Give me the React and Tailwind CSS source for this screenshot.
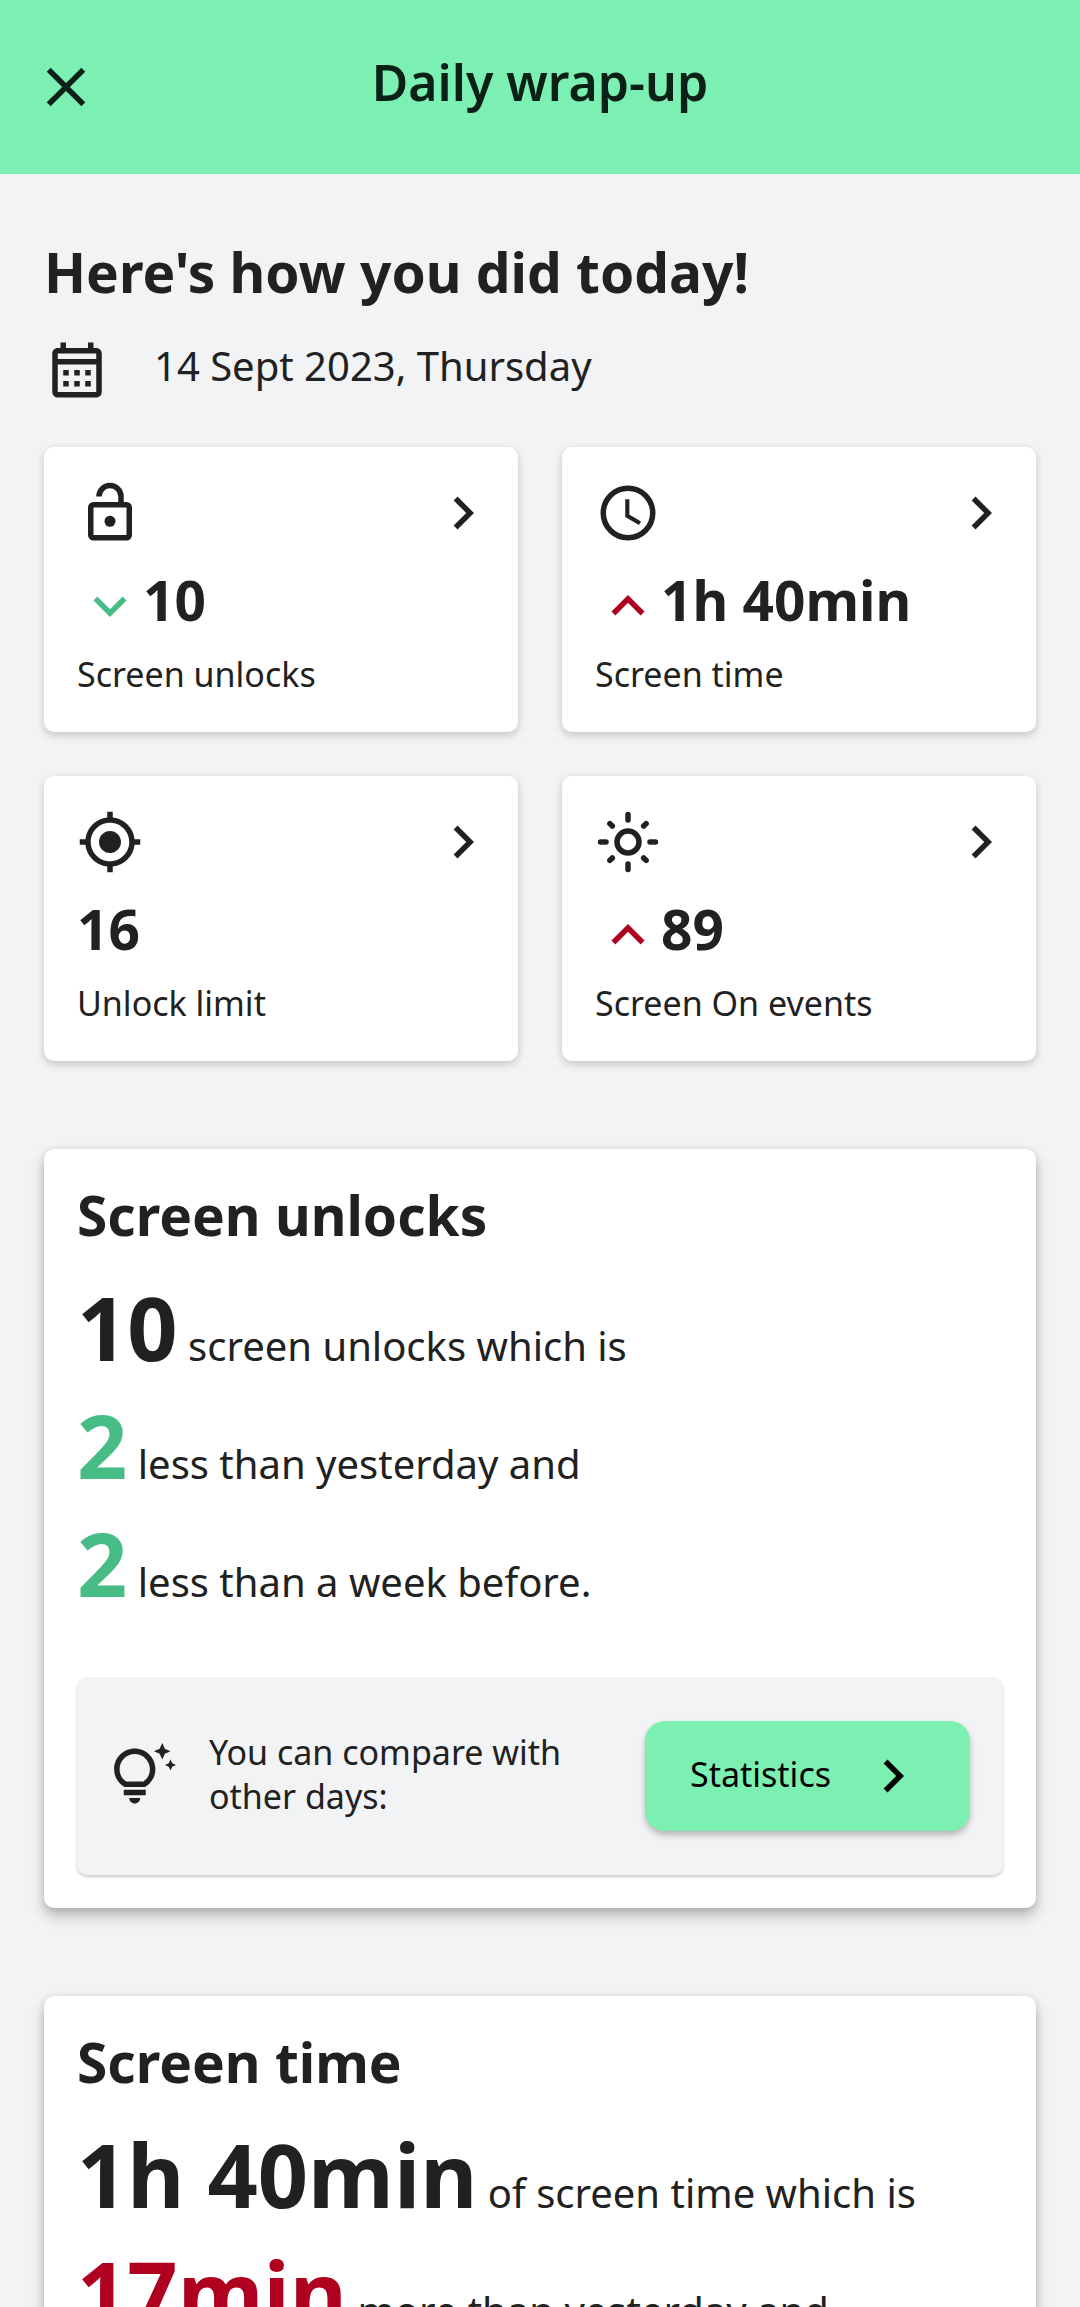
import {
  MdClose,
  MdOutlineCalendarMonth,
  MdChevronRight,
  MdExpandMore,
  MdExpandLess,
  MdGpsFixed,
  MdOutlineTipsAndUpdates,
} from "react-icons/md";

function LockOpenIcon() {
  return (
    <svg viewBox="0 0 24 24" className="size-[66px]" fill="none" stroke="currentColor" strokeWidth="2" aria-hidden="true">
      <rect x="5" y="9" width="14" height="12" rx="1" />
      <path d="M8 6a4 4 0 0 1 8 0v3" />
      <circle cx="12" cy="15" r="2" fill="currentColor" stroke="none" />
    </svg>
  );
}

function ClockIcon() {
  return (
    <svg viewBox="0 0 24 24" className="size-[66px]" fill="none" stroke="currentColor" strokeWidth="2" aria-hidden="true">
      <circle cx="12" cy="12" r="9" />
      <path d="M11.75 7v6l4.6 2.7" strokeWidth="1.5" />
    </svg>
  );
}

function SunIcon() {
  return (
    <svg viewBox="0 0 24 24" className="size-[66px]" fill="none" stroke="currentColor" strokeWidth="2" strokeLinecap="round" aria-hidden="true">
      <circle cx="12" cy="12" r="4" />
      <path d="M12 2v2M12 20v2M2 12h2M20 12h2M5.4 5.3l.9.9M17.7 17.8l.9.9M18.6 5.3l-.9.9M6.3 17.8l-.9.9" />
    </svg>
  );
}

function StatCard({ icon, trend, value, label }) {
  return (
    <a
      href="#details"
      className="block rounded-[10px] bg-white pt-[33px] pr-[22px] pb-9 pl-[33px] shadow-[0_3px_8px_rgba(0,0,0,0.2)]"
    >
      <div className="flex items-center justify-between">
        {icon}
        <MdChevronRight className="size-[66px]" />
      </div>
      <div className="mt-[18px] flex h-[72px] items-center">
        {trend === "down" && <MdExpandMore className="mt-3 size-[66px] text-[#48bc85]" />}
        {trend === "up" && <MdExpandLess className="mt-3 size-[66px] text-[#b00020]" />}
        <span className="text-[55px] leading-[72px] font-bold">{value}</span>
      </div>
      <div className="mt-4 text-[34px] leading-[44px]">{label}</div>
    </a>
  );
}

function SummaryLine({ value, tone = "text-[#212121]", children }) {
  return (
    <p className="text-[40px] leading-[118px]">
      <span className={`text-[88px] leading-[80px] font-bold ${tone}`}>{value}</span> {children}
    </p>
  );
}

function Section({ title, children }) {
  return (
    <section className="mt-[88px] rounded-[10px] bg-white px-[33px] pt-8 pb-[33px] shadow-[0_8px_14px_rgba(0,0,0,0.24),0_1px_6px_rgba(0,0,0,0.12)]">
      <h2 className="text-[55px] leading-[68px] font-bold">{title}</h2>
      <div className="mt-[38px]">{children}</div>
    </section>
  );
}

export default function App() {
  return (
    <div className="flex h-screen flex-col overflow-hidden bg-[#f2f3f5] font-['Noto_Sans',sans-serif] text-[#212121]">
      <header className="grid h-[174px] shrink-0 grid-cols-[88px_1fr_88px] items-center bg-[#7cf0b2] px-[22px] text-[#0b2016]">
        <button type="button" aria-label="Close" className="grid h-[88px] place-items-center">
          <MdClose className="size-[66px]" />
        </button>
        <h1 className="pb-[10px] text-center text-[50px] leading-[64px] font-semibold">Daily wrap-up</h1>
      </header>

      <main className="min-h-0 flex-1 overflow-y-auto px-11 pt-[62px] [scrollbar-width:none]">
        <h2 className="text-[55px] leading-[72px] font-bold">Here's how you did today!</h2>
        <div className="mt-[29px] flex h-[66px] items-center gap-11">
          <MdOutlineCalendarMonth className="size-[66px]" />
          <time dateTime="2023-09-14" className="pb-2 text-[40px] leading-[52px]">
            14 Sept 2023, Thursday
          </time>
        </div>

        <div className="mt-11 grid grid-cols-2 gap-11">
          <StatCard icon={<LockOpenIcon />} trend="down" value="10" label="Screen unlocks" />
          <StatCard icon={<ClockIcon />} trend="up" value="1h 40min" label="Screen time" />
          <StatCard icon={<MdGpsFixed className="size-[66px]" />} value="16" label="Unlock limit" />
          <StatCard icon={<SunIcon />} trend="up" value="89" label="Screen On events" />
        </div>

        <Section title="Screen unlocks">
          <SummaryLine value="10">screen unlocks which is</SummaryLine>
          <SummaryLine value="2" tone="text-[#48bc85]">less than yesterday and</SummaryLine>
          <SummaryLine value="2" tone="text-[#48bc85]">less than a week before.</SummaryLine>
          <div className="mt-9 flex items-center rounded-[10px] bg-[#f2f3f5] px-[33px] py-11 shadow-[0_2px_3px_rgba(0,0,0,0.2)]">
            <MdOutlineTipsAndUpdates className="size-[66px] shrink-0" />
            <p className="flex-1 px-[33px] pb-1 text-[34px] leading-[44px]">You can compare with other days:</p>
            <button
              type="button"
              className="flex h-[110px] w-[325px] shrink-0 items-center justify-between rounded-[20px] bg-[#7cf0b2] pr-11 pl-[45px] text-[34px] leading-[44px] text-black shadow-[0_4px_6px_rgba(0,0,0,0.25)]"
            >
              <span className="pb-1">Statistics</span>
              <MdChevronRight className="size-[66px]" />
            </button>
          </div>
        </Section>

        <Section title="Screen time">
          <SummaryLine value="1h 40min">of screen time which is</SummaryLine>
          <SummaryLine value="17min" tone="text-[#b00020]">more than yesterday and</SummaryLine>
        </Section>
      </main>
    </div>
  );
}
